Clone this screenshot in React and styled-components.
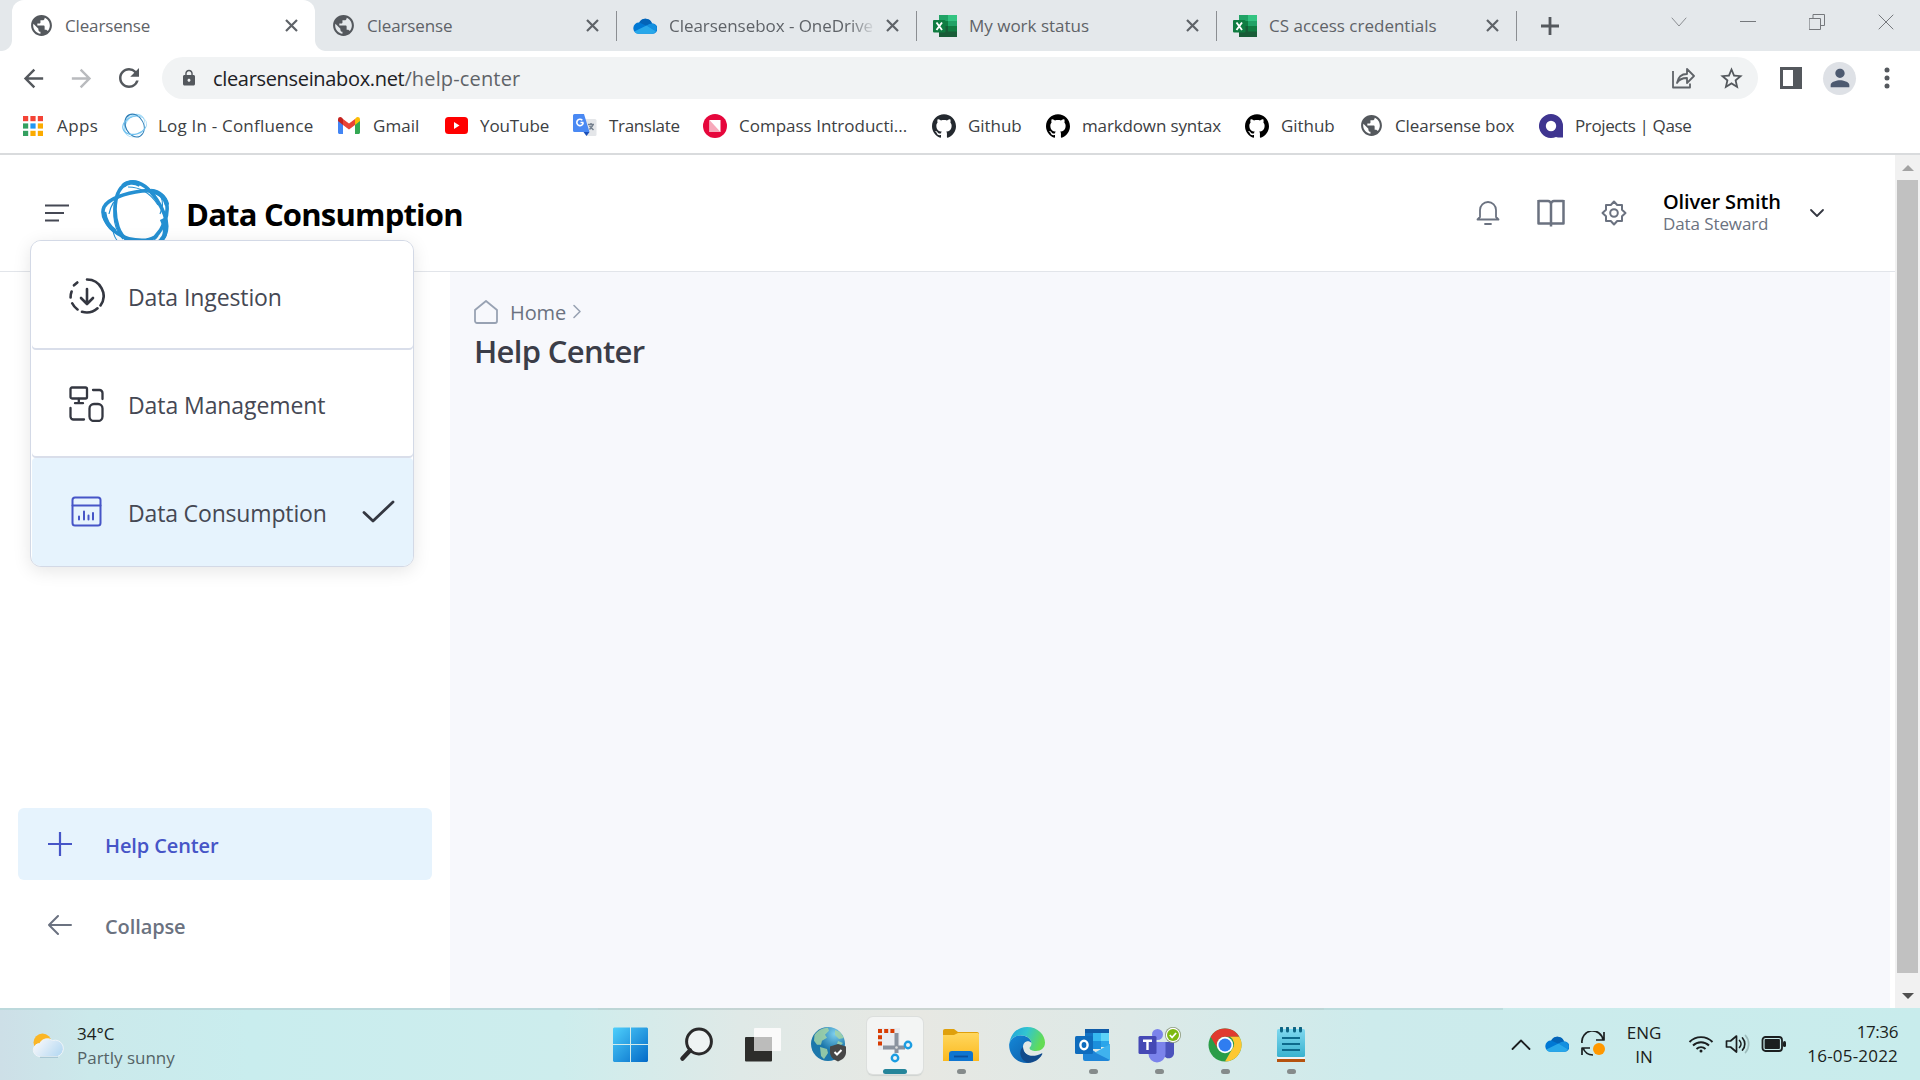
import React from "react";
import styled, { createGlobalStyle } from "styled-components";
import { MdPublic, MdLock, MdArrowBack, MdArrowForward, MdRefresh, MdStarBorder, MdPerson } from "react-icons/md";
import { SiGithub } from "react-icons/si";

const Global = createGlobalStyle`
  * { box-sizing: border-box; }
  body { margin: 0; overflow: hidden; background: #fff; font-family: "Open Sans", "Noto Sans", sans-serif; }
  svg { display: block; flex: none; }
`;

const Label = styled.span`
  font-size: ${(p) => p.$s}px;
  font-weight: ${(p) => p.$b || 400};
  letter-spacing: ${(p) => p.$ls || 0}px;
  line-height: ${(p) => p.$lh || 24}px;
  color: ${(p) => p.$c || "#3c4043"};
  padding-top: ${(p) => p.$pt || 0}px;
  white-space: nowrap;
`;

const Screen = styled.div`
  width: 1920px;
  height: 1080px;
  display: flex;
  flex-direction: column;
`;

/* browser chrome */
const TabStrip = styled.div`
  height: 51px;
  padding-left: 12px;
  display: flex;
  background: #e4e8eb;
  flex: none;
`;
const Tab = styled.div`
  position: relative;
  width: ${(p) => p.$w}px;
  height: 51px;
  padding: 0 17px 0 ${(p) => p.$pl}px;
  display: flex;
  align-items: center;
  gap: 12px;
  background: ${(p) => (p.$active ? "#fff" : "transparent")};
  border-radius: 12px 12px 0 0;
  &::before, &::after {
    content: "";
    display: ${(p) => (p.$active ? "block" : "none")};
    position: absolute;
    bottom: 0;
    width: 11px;
    height: 11px;
  }
  &::before { right: 100%; background: radial-gradient(circle at 0 0, transparent 10.5px, #fff 11.5px); }
  &::after { left: 100%; background: radial-gradient(circle at 100% 0, transparent 10.5px, #fff 11.5px); }
`;
const TabTitle = styled.div`
  flex: 1;
  min-width: 0;
  display: flex;
  mask-image: ${(p) => (p.$fade ? "linear-gradient(90deg,#000 88%,transparent 101%)" : "none")};
`;
const TabSep = styled.div`
  width: 1px;
  height: 30px;
  margin: 11px 0 0;
  background: #8b8e92;
`;
const NewTab = styled.div`
  width: 66px;
  display: flex;
  align-items: center;
  justify-content: center;
`;
const WindowButtons = styled.div`
  flex: 1;
  display: flex;
  justify-content: flex-end;
  height: 43px;
`;
const WindowButton = styled.div`
  width: 69px;
  display: flex;
  align-items: center;
  justify-content: center;
`;
const Toolbar = styled.div`
  height: 54px;
  display: flex;
  align-items: center;
  padding-left: 9px;
  flex: none;
`;
const NavButton = styled.div`
  width: 48px;
  display: flex;
  justify-content: center;
  color: ${(p) => p.$c || "#54585d"};
`;
const Omnibox = styled.div`
  width: 1596px;
  height: 42px;
  margin: 0 9px;
  padding: 0 3px 0 18px;
  border-radius: 21px;
  background: #f1f3f4;
  display: flex;
  align-items: center;
  color: #54585d;
`;
const Url = styled.div`
  flex: 1;
  display: flex;
  margin-left: 15px;
`;
const Share = styled.div`
  margin-right: 12px;
`;
const Avatar = styled.div`
  width: 33px;
  height: 33px;
  border-radius: 50%;
  background: #dee1e6;
  color: #4d5a70;
  display: flex;
  align-items: center;
  justify-content: center;
  margin: 0 7px 0 8px;
`;
const Bookmarks = styled.div`
  height: 50px;
  padding: 0 0 8px 21px;
  display: flex;
  align-items: center;
  border-bottom: 2px solid #d9dbdd;
  flex: none;
`;
const Bookmark = styled.div`
  width: ${(p) => p.$w}px;
  display: flex;
  align-items: center;
  gap: 12px;
  margin-top: 1px;
`;
const IconBox = styled.div`
  width: 24px;
  display: flex;
  justify-content: center;
  flex: none;
`;

/* page */
const Viewport = styled.div`
  height: 853px;
  display: flex;
  position: relative;
`;
const Page = styled.div`
  width: 1895px;
  display: flex;
  flex-direction: column;
`;
const Header = styled.header`
  height: 117px;
  border-bottom: 1px solid #e2e5ea;
  display: flex;
  align-items: center;
  padding: 0 0 1px 45px;
`;
const Brand = styled.div`
  display: flex;
  align-items: center;
  flex: 1;
`;
const LogoWrap = styled.div`
  margin: 0 17px 0 32px;
`;
const Actions = styled.div`
  display: flex;
  align-items: center;
  gap: 36px;
`;
const User = styled.div`
  width: 146px;
  display: flex;
  flex-direction: column;
`;
const Caret = styled.div`
  width: 86px;
`;
const Body = styled.div`
  flex: 1;
  display: flex;
`;
const Sidebar = styled.nav`
  width: 450px;
  display: flex;
  flex-direction: column;
  justify-content: flex-end;
  gap: 9px;
  padding: 0 18px 47px;
`;
const SideItem = styled.div`
  height: 72px;
  border-radius: 6px;
  padding-left: 30px;
  display: flex;
  align-items: center;
  gap: 33px;
  background: ${(p) => (p.$active ? "#e6f3fd" : "transparent")};
`;
const Content = styled.main`
  flex: 1;
  margin-right: 5px;
  background: #f7f8fc;
  padding: 25px 0 0 24px;
`;
const Crumbs = styled.div`
  display: flex;
  align-items: center;
  height: 30px;
`;
const CrumbText = styled.div`
  display: flex;
  margin-left: 12px;
`;
const Scrollbar = styled.div`
  width: 25px;
  background: #f1f1f1;
  display: flex;
  flex-direction: column;
  align-items: center;
  padding: 10px 0 9px;
`;
const Thumb = styled.div`
  width: 21px;
  height: 793px;
  margin: 9px 0 20px;
  background: #c1c1c1;
`;
const Arrow = styled.div`
  width: 0;
  height: 0;
  border: 6px solid transparent;
  border-top-width: ${(p) => (p.$up ? 0 : 6)}px;
  border-bottom-width: ${(p) => (p.$up ? 6 : 0)}px;
  border-bottom-color: ${(p) => (p.$up ? "#a3a3a3" : "transparent")};
  border-top-color: ${(p) => (p.$up ? "transparent" : "#505050")};
`;
const Menu = styled.div`
  position: absolute;
  left: 30px;
  top: 85px;
  width: 384px;
  height: 327px;
  background: #fff;
  border: 1px solid #d3d9e6;
  border-radius: 11px;
  box-shadow: 0 4px 18px rgba(0, 0, 0, 0.1);
  padding: 0 0 0 1px;
  overflow: hidden;
`;
const MenuItem = styled.div`
  height: 108.5px;
  padding: ${(p) => (p.$active ? 0 : 1)}px 18px 0 37px;
  display: flex;
  align-items: center;
  background: ${(p) => (p.$active ? "#e6f3fd" : "#fff")};
  box-shadow: ${(p) => (p.$active ? "none" : "inset 0 -2px 0 #d9deea")};
  border-radius: 4px;
`;
const MenuIcon = styled.div`
  width: 59px;
`;
const MenuText = styled.div`
  flex: 1;
  padding-top: 2px;
`;

/* taskbar */
const Taskbar = styled.footer`
  height: 72px;
  display: flex;
  align-items: stretch;
  background:
    linear-gradient(90deg, #cddfe7 0, #cbe9eb 90px, #c9edee 250px, #cdeded 560px, #dfe9e7 740px, #e7e8e3 920px, #dde9e7 1130px, #cdebec 1370px, #c8ecec 1920px);
`;
const Weather = styled.div`
  width: 598px;
  padding-left: 32px;
  display: flex;
  align-items: center;
  gap: 11px;
  border-top: 2px solid #bcd9dc;
`;
const Stack = styled.div`
  display: flex;
  flex-direction: column;
  align-items: ${(p) => p.$a || "flex-start"};
  padding-top: ${(p) => p.$pt || 0}px;
`;
const Apps = styled.div`
  display: flex;
  border-top: 2px solid rgba(150, 175, 175, 0.35);
`;
const AppCell = styled.div`
  width: 66px;
  height: 70px;
  display: flex;
  flex-direction: column;
  align-items: center;
  padding-top: 7px;
`;
const AppTile = styled.div`
  width: 56px;
  height: 57px;
  display: flex;
  flex-direction: column;
  align-items: center;
  justify-content: space-between;
  padding-top: 10px;
  border-radius: 6px;
  background: ${(p) => (p.$active ? "#f3f5f4" : "transparent")};
  box-shadow: ${(p) => (p.$active ? "0 0 0 1px #dcdfdd, 0 2px 1px #cfd3d1" : "none")};
`;
const Indicator = styled.div`
  width: ${(p) => (p.$active ? 24 : 9)}px;
  height: 5px;
  border-radius: 3px;
  background: ${(p) => (p.$active ? "#25859a" : "#858b8b")};
  visibility: ${(p) => (p.$off ? "hidden" : "visible")};
`;
const Edge = styled.div`
  width: 179px;
  border-top: 2px solid #bcdcdd;
`;
const Tray = styled.div`
  flex: 1;
  display: flex;
  align-items: center;
`;
const TrayCell = styled.div`
  width: ${(p) => p.$w || 36}px;
  display: flex;
  justify-content: center;
`;
const Clock = styled.div`
  flex: 1;
  padding-right: 22px;
`;

const Line = ({ w, h = w, vb, d, c, sw = 2, children, cap = "round" }) => (
  <svg width={w} height={h} viewBox={vb || `0 0 ${w} ${h}`} fill="none" stroke={c} strokeWidth={sw} strokeLinecap={cap} strokeLinejoin="round">
    {d && <path d={d} />}
    {children}
  </svg>
);
const CloseX = () => <Line w={13} c="#5f6368" sw={2.2} cap="butt" d="M1 1 12 12M12 1 1 12" />;

const Cloud = () => (
  <svg width="24" height="16" viewBox="0 0 24 16">
    <path d="M6.2 4.600A7 7 0 0 1 19 5.400a5.200 5.200 0 0 1 .4 10.400H5.600A5.600 5.600 0 0 1 6.200 4.600z" fill="#0078d4" />
    <path d="M6.200 4.600A7 7 0 0 1 19 5.400L14 8z" fill="#0364b8" />
    <path d="M19 5.400a5.200 5.200 0 0 1 3.900 7.900L13.500 7.400c2-1.200 3.500-2 5.500-2z" fill="#1490df" />
    <path d="M1.300 13.500 13.500 7.400l9.400 5.900c-.8 1.500-2.100 2.500-3.500 2.500H5.600c-1.900 0-3.400-.9-4.300-2.300z" fill="#28a8ea" />
  </svg>
);
const Excel = () => (
  <svg width="24" height="22" viewBox="0 0 24 22">
    <path d="M6 0h9v7H6z" fill="#21a366" /><path d="M15 0h9v6h-9z" fill="#33c481" />
    <path d="M6 6h9v5H6z" fill="#107c41" /><path d="M15 6h9v5h-9z" fill="#21a366" />
    <path d="M6 11h18v11H6z" fill="#185c37" /><path d="M15 11h9v5.500h-9z" fill="#107c41" />
    <rect y="5" width="12.500" height="12.500" rx="1" fill="#107c41" />
    <path d="M3.500 7.500 9 15M9 7.500 3.500 15" stroke="#fff" strokeWidth="1.900" />
  </svg>
);
const AppsGrid = () => {
  const c = ["#f44336", "#f44336", "#f44336", "#34a060", "#2196f3", "#fbab00", "#34a060", "#fbab00", "#fbab00"];
  return (
    <svg width="20" height="20" viewBox="0 0 20 20">
      {c.map((f, i) => <rect key={i} x={(i % 3) * 7.4} y={Math.floor(i / 3) * 7.4} width="5.200" height="5.200" fill={f} />)}
    </svg>
  );
};
const RingSmall = () => (
  <svg width="25" height="25" viewBox="0 0 68 68" fillRule="evenodd">
    <path fill="#a5dcf8" transform="rotate(-58 34 34)" d="M0 34a34 27 0 1 1 68 0a34 27 0 1 1-68 0zM2 36a31 24 0 1 0 62 0a31 24 0 1 0-62 0z" />
    <path fill="#2f7fb8" transform="rotate(63 34 34)" d="M0 34a34 26 0 1 1 68 0a34 26 0 1 1-68 0zM3.500 33.500a31 23 0 1 0 62 0a31 23 0 1 0-62 0z" />
    <path fill="#6fc0ee" transform="rotate(-16 34 34)" d="M0 34a34 25.500 0 1 1 68 0a34 25.500 0 1 1-68 0zM3 33.500a32 22.500 0 1 0 64 0a32 22.500 0 1 0-64 0z" />
  </svg>
);
const Logo = () => (
  <svg width="68" height="68" viewBox="0 0 68 68" fill="none" stroke="#2590d2" strokeLinejoin="round">
    <path strokeWidth="3.600" d="M30 3C39 2 48 9 56 21C65 35 68 47 64 56C60 64 53 66 45 66C33 66 21 61 17 48C12 33 12 7 30 3z" />
    <path strokeWidth="3.600" d="M41 12C53 10 65 16 66 27C67 38 62 50 54 58C45 64 24 62 12 51C4 43 0 35 3 28C7 20 24 14 41 12z" />
    <path strokeWidth="1.200" d="M8 35C10 25 14 20 20 17M27 8C40 8 50 15 57 26M12 52C14 62 20 66 26 66M59 35C62 28 62 22 60 18M15 20C10 36 14 52 22 60M42 66C50 64 55 60 57 57" />
    <path strokeWidth="4.500" d="M22 7C26 3 33 2 39 6M3 33C4 42 8 48 14 52M50 12C58 13 64 18 66 26M61 40C65 49 65 57 60 61" />
  </svg>
);
const Gmail = () => (
  <svg width="22" height="17" viewBox="0 0 22 17">
    <path d="M0 3v12.500C0 16.400.7 17 1.500 17H5V7z" fill="#4285f4" /><path d="M22 3v12.500c0 .9-.7 1.500-1.500 1.500H17V7z" fill="#34a853" />
    <path d="M17 2v6l5-4V2.500C22 0 19.500-.6 18 .7z" fill="#fbbc04" /><path d="M5 8V2l6 4.600L17 2v6l-6 4.600z" fill="#ea4335" />
    <path d="M0 2.500V4l5 4V2L4 .7C2.500-.6 0 0 0 2.500z" fill="#c5221f" />
  </svg>
);
const YouTube = () => (
  <svg width="23" height="17" viewBox="0 0 23 17"><rect width="23" height="17" rx="3.500" fill="#f00" /><path d="M9 5v7l5.500-3.500z" fill="#fff" /></svg>
);
const Translate = () => (
  <svg width="24" height="23" viewBox="0 0 24 23">
    <path d="M9 5h13a1.500 1.500 0 0 1 1.500 1.500v14A1.500 1.500 0 0 1 22 22h-9z" fill="#e4e6e9" />
    <path d="M15 10.500h6M18 9v1.500M20 10.500c-.5 2-2 3.500-3.500 5M16.500 12l4 4" stroke="#75808e" strokeWidth="1.500" fill="none" />
    <path d="M1.500 0H11l5.500 18h-15A1.500 1.500 0 0 1 0 16.500v-15A1.500 1.500 0 0 1 1.500 0z" fill="#4a89f3" /><path d="M10.500 18h6l-3 4z" fill="#1a4fb8" />
    <path d="M10.500 8.500H7.500M10.200 8.700A3.200 3.200 0 1 1 9.300 6.200" stroke="#fff" strokeWidth="1.600" fill="none" />
  </svg>
);
const Compass = () => (
  <svg width="24" height="24" viewBox="0 0 24 24"><circle cx="12" cy="12" r="12" fill="#e6073c" /><path d="M6.500 6h11v12h-11z" fill="#fff" /><path d="M6.500 6l11 12h-11z" fill="#f7a9bb" /></svg>
);
const Qase = () => (
  <svg width="24" height="24" viewBox="0 0 24 24">
    <path d="M12 0A12 12 0 0 1 24 12V23.500H19L17 22.900A12 12 0 1 1 12 0z" fill="#3f3590" /><circle cx="12" cy="12" r="5.200" fill="#fff" />
  </svg>
);

const WeatherIcon = () => (
  <svg width="34" height="28" viewBox="0 0 34 28">
    <defs><linearGradient id="wc" x1="0" y1="0" x2="1" y2="0.500"><stop offset="0.200" stopColor="#f1f5fa" /><stop offset="1" stopColor="#bcdcf3" /></linearGradient></defs>
    <circle cx="10.500" cy="11.500" r="9" fill="#fbb625" />
    <path d="M8 25.500a6.500 6.500 0 0 1-.4-13A8.500 8.500 0 0 1 20.500 9.500a8 8 0 0 1 5 16z" fill="url(#wc)" stroke="#eef4f8" />
    <path d="M8 26.300h18" stroke="#a5c5d2" strokeWidth="1.200" />
  </svg>
);
const Start = () => (
  <svg width="36" height="36" viewBox="0 0 36 36">
    <defs><linearGradient id="st" gradientUnits="userSpaceOnUse" x1="0" y1="0" x2="36" y2="36"><stop stopColor="#4fd0fc" /><stop offset="1" stopColor="#0067c6" /></linearGradient></defs>
    <path d="M1 .5h16v16.500H0V1.500zM18 .5h16l1 1V17H18zM0 18h17v17H1l-1-1zM18 18h17v16l-1 1H18z" fill="url(#st)" />
  </svg>
);
const SearchIcon = () => (
  <svg width="36" height="36" viewBox="0 0 36 36" fill="none" stroke="#2a2a2b"><circle cx="20" cy="14.500" r="12.400" strokeWidth="3" fill="#eef3f3" /><path d="M11 23.500 3.500 31.500" strokeWidth="4.500" strokeLinecap="round" /></svg>
);
const TaskView = () => (
  <svg width="36" height="36" viewBox="0 0 36 36"><rect y="10" width="27" height="24.500" rx="1" fill="#2d2d2b" /><rect x="9" y="1" width="27" height="23" rx="1" fill="#fafafa" /><path d="M9 10h18v14H9z" fill="#bcbcbb" /></svg>
);
const GlobeApp = () => (
  <svg width="36" height="36" viewBox="0 0 36 36">
    <defs><radialGradient id="gl" cx="0.700" cy="0.200"><stop stopColor="#7fd0ee" /><stop offset="1" stopColor="#1c77ab" /></radialGradient></defs>
    <circle cx="17" cy="17" r="17" fill="url(#gl)" />
    <path d="M3.500 8C7 3 12 1 17 .8l1 3-4 4 2 3-5 3-1 4-4 0-3-4zM24 3l5 2 4 6-5 1-4-4zM9 20l7 2 1 4-4 6-3-3zM27 14l5 2-2 2-4-1z" fill="#a3d3a6" opacity=".85" />
    <path d="M27 17l8 2.500v6c0 4.500-4 7.500-8 9-4-1.500-8-4.500-8-9v-6z" fill="#474747" /><path d="m23.500 25 2.500 2.500 4.500-4.500" stroke="#fff" strokeWidth="2" fill="none" />
  </svg>
);
const Snip = () => (
  <svg width="36" height="36" viewBox="0 0 36 36" fill="none">
    <path d="M1 1h22v22H1z" fill="#e9ebef" />
    <path d="M1 4h17M3 2v18" stroke="#d83b01" strokeWidth="4" strokeDasharray="4 2.200" />
    <path d="M19.500 6v20M6 20.500h22" stroke="#8a929e" strokeWidth="4" /><circle cx="19.500" cy="20.500" r="1.300" fill="#ddd" />
    <circle cx="31" cy="18" r="3.200" stroke="#1b9de2" strokeWidth="2.400" /><circle cx="18" cy="31" r="3.200" stroke="#1b9de2" strokeWidth="2.400" />
  </svg>
);
const Explorer = () => (
  <svg width="36" height="36" viewBox="0 0 36 36">
    <defs><linearGradient id="ex" x1="0" y1="0" x2="0" y2="1"><stop stopColor="#ffd75e" /><stop offset="1" stopColor="#fbb91f" /></linearGradient></defs>
    <path d="M0 4c0-1.200.8-2 2-2h9l4 3h19c1.200 0 2 .8 2 2v6H0z" fill="#dfa00c" /><path d="M0 8h11l4-2h20l1 1v27H0z" fill="url(#ex)" />
    <path d="M6 34V27a3 3 0 0 1 3-3h18a3 3 0 0 1 3 3v7z" fill="#0f75d0" /><path d="M11 29.500h14" stroke="#0a4f9c" strokeWidth="1.800" />
  </svg>
);
const EdgeIcon = () => (
  <svg width="36" height="36" viewBox="0 0 36 36">
    <defs>
      <linearGradient id="e1" x1="0" y1="0" x2="1" y2="0.300"><stop stopColor="#1fa0dc" /><stop offset="0.500" stopColor="#32c5d0" /><stop offset="1" stopColor="#63dc55" /></linearGradient>
      <linearGradient id="e2" x1="0" y1="0" x2="1" y2="1"><stop stopColor="#1488d8" /><stop offset="1" stopColor="#0c59a4" /></linearGradient>
    </defs>
    <path d="M.5 16C2 6 9 0 18 0c11 0 18 8 18 15.500 0 5.500-4 8.500-9 8.500-4 0-6.500-1.400-6.500-3 0-1 2-1.700 2-4.500C22.500 12 18 8.500 12 8.500 6 8.500 2 11.500.5 16z" fill="url(#e1)" />
    <path d="M.2 17C2 11 6.500 8.500 11.500 8.500c6 0 10.500 3 11 7.500-3-3.500-8.500-1.500-8.500 4 0 7.500 8 11 14 9.500-2.500 4-6 6.500-10.500 6.500C7 36-.5 27 .2 17z" fill="url(#e2)" />
    <path d="M14 20c0 8 9 11.500 18.500 6.500.8-.4 1 .2.6.9C30 33 24 36 19 35.700 11 33.500 9 24 14 20z" fill="#114a8b" />
  </svg>
);
const Outlook = () => (
  <svg width="36" height="36" viewBox="0 0 36 36">
    <path d="M10 2h24v16H10z" fill="#0f5ba8" /><path d="M10 6h8v12h-8z" fill="#1373c4" /><path d="M18 6h8v8h-8z" fill="#35b8f1" /><path d="M26 6h8v8h-8z" fill="#5cd2f8" /><path d="M18 14h8v8h-8z" fill="#1c8fdc" />
    <path d="M26 14h8v6h-8z" fill="#2ba5ea" />
    <path d="M8 17l14 9 13-9v15a2 2 0 0 1-2 2H10a2 2 0 0 1-2-2z" fill="#1f86d8" /><path d="M35 17v16L20 25.500z" fill="#3fb2ee" />
    <rect y="9" width="18" height="18" rx="1.500" fill="#0f6cbd" /><ellipse cx="9" cy="18" rx="3.600" ry="4.200" fill="none" stroke="#fff" strokeWidth="2.400" />
  </svg>
);
const Teams = () => (
  <svg width="44" height="36" viewBox="-1.500 0 44 36">
    <circle cx="19" cy="7.500" r="5.500" fill="#7b83eb" /><path d="M25 15h10.500v10a5 5 0 0 1-10.500 2z" fill="#4b53bc" /><path d="M10 15h17v12a8.500 8.500 0 0 1-17 0z" fill="#7b83eb" />
    <rect y="9" width="18" height="18" rx="1.500" fill="#4549b5" /><path d="M4.500 13.800h9M9 13.800V23" stroke="#fff" strokeWidth="2.400" />
    <circle cx="34.500" cy="8" r="8" fill="#8d9a7e" /><circle cx="34.500" cy="8" r="7.200" fill="#fff" /><circle cx="34.500" cy="8" r="6" fill="#7eb913" /><path d="m31.300 8 2.300 2.500 4-4.500" stroke="#fff" strokeWidth="1.800" fill="none" />
  </svg>
);
const Chrome = () => (
  <svg width="34" height="36" viewBox="0 0 34 36">
    <g transform="translate(0 1)">
      <circle cx="17" cy="17" r="16.500" fill="#2a9d48" />
      <path d="M2.700 8.700A16.500 16.500 0 0 1 31.300 8.700H17a8.300 8.300 0 0 0-7.200 12.400z" fill="#e03a2f" />
      <path d="M31.300 8.700A16.500 16.500 0 0 1 17 33.500l7.200-12.400A8.300 8.300 0 0 0 22 8.700z" fill="#fdc831" />
      <circle cx="17" cy="17" r="8.200" fill="#fff" /><circle cx="17" cy="17" r="6.500" fill="#2f7df0" />
    </g>
  </svg>
);
const Notepad = () => (
  <svg width="30" height="36" viewBox="0 0 30 36">
    <defs><linearGradient id="np" x1="0" y1="0" x2="0" y2="1"><stop stopColor="#7fd8ef" /><stop offset="1" stopColor="#39b2cf" /></linearGradient></defs>
    <path d="M1 30h28v5H1z" fill="#b5530f" /><path d="M1 28h28v4H1z" fill="#f3f3f3" /><rect x="1" y="2" width="28" height="28" rx="1.500" fill="url(#np)" />
    <path d="M5.500 1v3M11.500 1v3M18.500 1v3M24.500 1v3" stroke="#0d6483" strokeWidth="3" strokeLinecap="round" /><path d="M6 11h18M6 17h18M6 23h18" stroke="#0d6a8c" strokeWidth="2" />
  </svg>
);

const TABS = [
  { icon: <MdPublic size={25} color="#54585d" />, t: "Clearsense", w: 303, pl: 17, ls: -0.15, active: true },
  { icon: <MdPublic size={25} color="#54585d" />, t: "Clearsense", w: 301, pl: 16, ls: -0.12, sep: true },
  { icon: <Cloud />, t: "Clearsensebox - OneDrive", w: 299, pl: 16, ls: -0.05, sep: true, fade: true },
  { icon: <Excel />, t: "My work status", w: 299, pl: 16, ls: 0, sep: true },
  { icon: <Excel />, t: "CS access credentials", w: 299, pl: 16, ls: 0, sep: true },
];
const MARKS = [
  { icon: <AppsGrid />, t: "Apps", w: 101, ls: 0.4 },
  { icon: <RingSmall />, t: "Log In - Confluence", w: 215, ls: 0.2 },
  { icon: <Gmail />, t: "Gmail", w: 107, ls: 0.05 },
  { icon: <YouTube />, t: "YouTube", w: 129, ls: -0.1 },
  { icon: <Translate />, t: "Translate", w: 130, ls: -0.33 },
  { icon: <Compass />, t: "Compass Introducti...", w: 229, ls: 0 },
  { icon: <SiGithub size={24} color="#24292f" />, t: "Github", w: 114, ls: -0.05 },
  { icon: <SiGithub size={24} color="#000" />, t: "markdown syntax", w: 199, ls: -0.14 },
  { icon: <SiGithub size={24} color="#000" />, t: "Github", w: 114, ls: -0.05 },
  { icon: <MdPublic size={25} color="#54585d" />, t: "Clearsense box", w: 180, ls: -0.09 },
  { icon: <Qase />, t: "Projects | Qase", w: 140, ls: -0.38 },
];
const MENU = [
  {
    t: "Data Ingestion", ls: -0.1,
    icon: <Line w={36} c="#343741" sw={2.6}><path d="M18 1.500A16.500 16.500 0 0 1 31.500 27.500M28.500 30.300A16.500 16.500 0 0 1 13 33.800M8.500 31.500A16.500 16.500 0 0 1 3.200 25.300M1.600 19.500A16.500 16.500 0 0 1 2.600 13.500M5 7.300 8.300 4.500" /><path d="M18 11v14M12 20l6 6 6-6" /></Line>,
  },
  {
    t: "Data Management", ls: -0.08,
    icon: <Line w={36} c="#343741" sw={2.3}><rect x="1.500" y="1.500" width="16.500" height="11" rx="1.500" /><path d="M9.800 13v4M6 17.200h8M24 4h6.500a3 3 0 0 1 3 3v6M1.500 22v8.500a3 3 0 0 0 3 3H15" /><rect x="20.500" y="18" width="13" height="17" rx="4.500" /></Line>,
  },
  {
    t: "Data Consumption", ls: -0.16, active: true,
    icon: <Line w={36} c="#4655c7" sw={2}><rect x="3.500" y="3.500" width="28" height="28" rx="2.500" /><path d="M3.500 11.500h28" /><path d="M10 22.500v3M15 17.500v8M19.500 21.500v4M24 19v6.500" /></Line>,
  },
];
const APPS = [
  { i: <Start />, off: true }, { i: <SearchIcon />, off: true }, { i: <TaskView />, off: true }, { i: <GlobeApp />, off: true },
  { i: <Snip />, active: true }, { i: <Explorer /> }, { i: <EdgeIcon />, off: true }, { i: <Outlook /> }, { i: <Teams /> }, { i: <Chrome /> }, { i: <Notepad /> },
];

export default function App() {
  return (
    <Screen>
      <Global />
      <TabStrip>
        {TABS.map((t, i) => (
          <React.Fragment key={i}>
            <Tab $w={t.w} $pl={t.pl} $active={t.active}>
              <IconBox>{t.icon}</IconBox>
              <TabTitle $fade={t.fade}><Label $s={17} $c="#5f6368" $ls={t.ls}>{t.t}</Label></TabTitle>
              <CloseX />
            </Tab>
            {t.sep && <TabSep />}
          </React.Fragment>
        ))}
        <NewTab><Line w={18} c="#54585d" sw={2.8} cap="butt" d="M9 0v18M0 9h18" /></NewTab>
        <WindowButtons>
          <WindowButton><Line w={16} h={10} c="#8a8d91" sw={1} d="M1 1l7 8 7-8" /></WindowButton>
          <WindowButton><Line w={16} h={2} c="#75787c" sw={1} d="M0 .5h16" /></WindowButton>
          <WindowButton><Line w={16} c="#75787c" sw={1}><path d="M.5 4.500h11v11H.5zM4 4.500V.5h11.500v11H12" /></Line></WindowButton>
          <WindowButton><Line w={16} c="#75787c" sw={1} d="M1 1l14 14M15 1 1 15" /></WindowButton>
        </WindowButtons>
      </TabStrip>
      <Toolbar>
        <NavButton><MdArrowBack size={29} /></NavButton>
        <NavButton $c="#b9bbbe"><MdArrowForward size={29} /></NavButton>
        <NavButton><MdRefresh size={30} /></NavButton>
        <Omnibox>
          <MdLock size={18} />
          <Url>
            <Label $s={20} $c="#202124" $ls={-0.33} $pt={1}>clearsenseinabox.net</Label>
            <Label $s={20} $c="#5f6368" $ls={0.15} $pt={1}>/help-center</Label>
          </Url>
          <Share><Line w={24} c="#5f6368" sw={1.8} cap="butt" d="M2 5v16.500h17v-4M6 17c1-6 4-9 10-9V3l7 7-7 7v-5c-5 0-8 1.500-10 5z" /></Share>
          <NavButton><MdStarBorder size={27} /></NavButton>
        </Omnibox>
        <NavButton><svg width="22" height="22"><path d="M0 0h22v22H0zM3 3v16h10V3z" fillRule="evenodd" fill="#54585d" /></svg></NavButton>
        <Avatar><MdPerson size={28} /></Avatar>
        <NavButton><svg width="6" height="22" fill="#54585d"><circle cx="3" cy="3" r="2.500" /><circle cx="3" cy="11" r="2.500" /><circle cx="3" cy="19" r="2.500" /></svg></NavButton>
      </Toolbar>
      <Bookmarks>
        {MARKS.map((b, i) => (
          <Bookmark key={i} $w={b.w}><IconBox>{b.icon}</IconBox><Label $s={17} $ls={b.ls}>{b.t}</Label></Bookmark>
        ))}
      </Bookmarks>
      <Viewport>
        <Page>
          <Header>
            <Brand>
              <Line w={24} h={18} c="#454854" sw={1.8} cap="butt" d="M0 1.500h24M0 9h19M0 16.500h14" />
              <LogoWrap><Logo /></LogoWrap>
              <Label $s={31} $b={700} $c="#000" $lh={40} $ls={-0.8} $pt={2}>Data Consumption</Label>
            </Brand>
            <Actions>
              <Line w={26} c="#6b7280" sw={1.8}><path d="M5 17v-7a8 8 0 0 1 16 0v7l2.500 2.500H2.500zM10 24h6" /></Line>
              <Line w={28} c="#6b7280" sw={2.5} cap="butt" d="M1.500 2h9.500a3 3 0 0 1 3 3v22.500M26.500 2H17a3 3 0 0 0-3 3M1.500 1v23.500h25V1" />
              <Line w={26} c="#6b7280" sw={2}><path d="M13 1.500 16.200 5H21v4.800L24.500 13 21 16.200V21h-4.800L13 24.500 9.800 21H5v-4.800L1.500 13 5 9.800V5h4.800z" /><circle cx="13" cy="13" r="3.800" /></Line>
              <User>
                <Label $s={20} $b={600} $c="#000" $lh={23} $ls={-0.12}>Oliver Smith</Label>
                <Label $s={17} $c="#6b7280" $lh={22} $ls={-0.1}>Data Steward</Label>
              </User>
            </Actions>
            <Caret><Line w={16} h={10} c="#343741" sw={1.8} d="M2 2 8 8l6-6" /></Caret>
          </Header>
          <Body>
            <Sidebar>
              <SideItem $active><Line w={24} c="#4655c7" sw={2.2} cap="butt" d="M12 0v24M0 12h24" /><Label $s={20} $b={600} $c="#4655c7" $ls={-0.12} $pt={3}>Help Center</Label></SideItem>
              <SideItem><Line w={24} c="#6b7280" sw={2} d="M23 12H1M10 3 1 12l9 9" /><Label $s={20} $b={600} $c="#6b7280" $ls={-0.1} $pt={3}>Collapse</Label></SideItem>
            </Sidebar>
            <Content>
              <Crumbs>
                <Line w={24} c="#98a2b3" sw={1.8} d="M1 10 12 1l11 9v11a2 2 0 0 1-2 2H3a2 2 0 0 1-2-2z" />
                <CrumbText><Label $s={20} $c="#6b7280" $pt={1} $ls={-0.1}>Home</Label></CrumbText>
                <Line w={16} c="#98a2b3" sw={1.6} d="M8 1.500l6 6-6 6" />
              </Crumbs>
              <Label $s={31} $b={600} $c="#3b3d48" $lh={48} $ls={-0.68}>Help Center</Label>
            </Content>
          </Body>
        </Page>
        <Scrollbar><Arrow $up /><Thumb /><Arrow /></Scrollbar>
        <Menu>
          {MENU.map((m) => (
            <MenuItem key={m.t} $active={m.active}>
              <MenuIcon>{m.icon}</MenuIcon>
              <MenuText><Label $s={23} $c="#454854" $lh={30} $ls={m.ls}>{m.t}</Label></MenuText>
              {m.active && <Line w={33} h={24} c="#343741" sw={2.8} d="M2 12.500 11 21 31 2" />}
            </MenuItem>
          ))}
        </Menu>
      </Viewport>
      <Taskbar>
        <Weather>
          <WeatherIcon />
          <Stack $pt={1}>
            <Label $s={17} $c="#1b1f20">34°C</Label>
            <Label $s={17} $c="#556366">Partly sunny</Label>
          </Stack>
        </Weather>
        <Apps>
          {APPS.map((a, i) => (
            <AppCell key={i}><AppTile $active={a.active}>{a.i}<Indicator $active={a.active} $off={a.off} /></AppTile></AppCell>
          ))}
        </Apps>
        <Edge />
        <Tray>
          <TrayCell><Line w={20} h={11} c="#1b1f20" sw={1.8} d="M1.500 10 10 1.500l8.500 8.500" /></TrayCell>
          <TrayCell><Cloud /></TrayCell>
          <TrayCell><Line w={26} c="#1b1f20" sw={1.7} cap="butt"><path d="M2 12A10.500 10.500 0 0 1 23 9M24 1v8h-8M2 24v-7h8M3 17a11 11 0 0 0 10 7" /><circle cx="19" cy="18" r="6" fill="#ff9800" stroke="none" /></Line></TrayCell>
          <TrayCell $w={66}><Stack $a="center" $pt={2}><Label $s={17} $c="#1b1f20">ENG</Label><Label $s={17} $c="#1b1f20">IN</Label></Stack></TrayCell>
          <TrayCell $w={48}><Line w={26} h={20} c="#1b1f20" sw={1.9} cap="butt"><path d="M1.500 8a16 16 0 0 1 23 0M5 11.500a11.300 11.300 0 0 1 16 0M8.500 15a6.400 6.400 0 0 1 9 0" /><circle cx="13" cy="17" r="1.500" fill="#1b1f20" stroke="none" /></Line></TrayCell>
          <TrayCell $w={26}><Line w={26} h={20} c="#1b1f20" sw={1.7}><path d="M1.500 7v6h4l6 5V2l-6 5z" /><path d="M14.500 6.500a5 5 0 0 1 0 7M17.500 4a9 9 0 0 1 0 12" /><path d="M20.500 1.500a13 13 0 0 1 0 17" stroke="#9dbcbc" /></Line></TrayCell>
          <TrayCell $w={46}><Line w={26} h={16} c="#1b1f20" sw={1.8}><rect x="1.500" y="1" width="19.500" height="14" rx="3" /><rect x="4.500" y="4" width="13.500" height="8" fill="#1b1f20" /><path d="M23.500 6.500v3" strokeWidth={3} /></Line></TrayCell>
          <Clock>
            <Stack $a="flex-end"><Label $s={17} $c="#1b1f20" $ls={-0.4}>17:36</Label><Label $s={17} $c="#1b1f20" $ls={0.2}>16-05-2022</Label></Stack>
          </Clock>
        </Tray>
      </Taskbar>
    </Screen>
  );
}
